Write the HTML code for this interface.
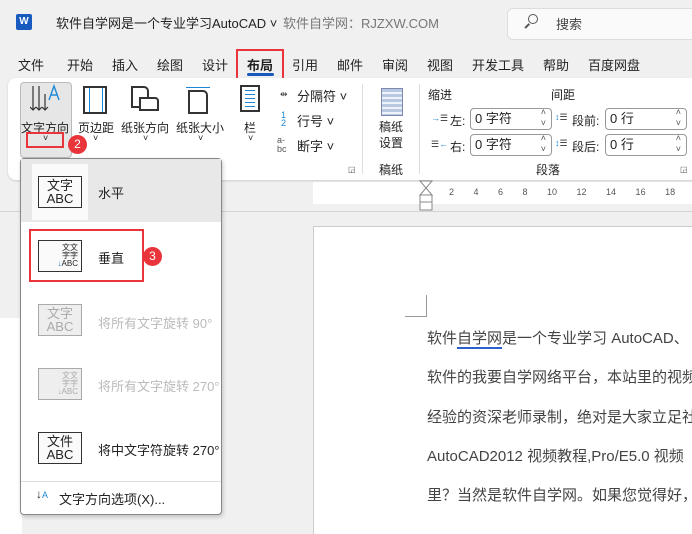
<!DOCTYPE html>
<html><head><meta charset="utf-8"><style>
*{margin:0;padding:0;box-sizing:border-box}
body{width:692px;height:534px;overflow:hidden;background:#f0f0f0;font-family:"Liberation Sans","Noto Sans CJK SC",sans-serif;position:relative;color:#222}
.a{position:absolute;white-space:nowrap}
.t{font-size:13px}
.s{font-size:12px}
.red{position:absolute;border:2px solid #e8343a}
.badge{position:absolute;width:19px;height:19px;border-radius:50%;background:#e8343a;color:#fff;font-size:12px;text-align:center;line-height:19px}
.spin{position:absolute;width:82px;height:22px;border:1px solid #999;border-radius:4px;background:#fff;font-size:13px;padding-left:4px;line-height:20px}
.spin:after{content:"˄\A˅";white-space:pre;position:absolute;right:5px;top:-2px;font-size:9px;line-height:11px;color:#555}
.mi{position:absolute;left:16px;width:42px;height:31px;border:1px solid #333;background:#fafafa;font-size:12px;text-align:center;line-height:13px;padding-top:2px}
.dim{border-color:#aaa;color:#aaa;background:#eee}
.doc{position:absolute;left:427px;font-size:15px;color:#444;white-space:nowrap}
.ic{position:absolute;font-size:9px;line-height:9px;color:#333}
</style></head><body>
<div class="a" style="left:16px;top:14px;width:16px;height:16px;background:#185abd;border-radius:2px;color:#fff;font-size:10px;font-weight:bold;text-align:center;line-height:16px">W</div>
<div class="a t" style="left:56px;top:13px">软件自学网是一个专业学习AutoCAD ˅</div>
<div class="a t" style="left:283px;top:13px;color:#777">软件自学网：RJZXW.COM</div>
<div class="a" style="left:507px;top:8px;width:200px;height:32px;background:#fafafa;border:1px solid #ddd;border-radius:6px"></div>
<div class="a" style="left:528px;top:14px;width:10px;height:10px;border:1.5px solid #555;border-radius:50%"></div>
<div class="a" style="left:524px;top:25px;width:6px;height:1.5px;background:#555;transform:rotate(-45deg)"></div>
<div class="a t" style="left:556px;top:14px;color:#444">搜索</div>
<div class="a t" style="left:18px;top:55px">文件</div>
<div class="a t" style="left:67px;top:55px">开始</div>
<div class="a t" style="left:112px;top:55px">插入</div>
<div class="a t" style="left:157px;top:55px">绘图</div>
<div class="a t" style="left:202px;top:55px">设计</div>
<div class="a t" style="left:247px;top:55px;font-weight:bold">布局</div>
<div class="a" style="left:247px;top:73px;width:27px;height:3px;background:#185abd;border-radius:2px"></div>
<div class="a t" style="left:292px;top:55px">引用</div>
<div class="a t" style="left:337px;top:55px">邮件</div>
<div class="a t" style="left:382px;top:55px">审阅</div>
<div class="a t" style="left:427px;top:55px">视图</div>
<div class="a t" style="left:472px;top:55px">开发工具</div>
<div class="a t" style="left:543px;top:55px">帮助</div>
<div class="a t" style="left:588px;top:55px">百度网盘</div>
<div class="red" style="left:236px;top:49px;width:48px;height:34px"></div>
<div class="badge" style="left:262px;top:81px">1</div>
<div class="a" style="left:8px;top:78px;width:700px;height:102px;background:#fff;border-radius:8px;box-shadow:0 1px 2px #ccc"></div>
<div class="a" style="left:20px;top:82px;width:52px;height:76px;background:#e6e6e6;border:1px solid #bbb;border-radius:4px"></div>
<svg class="a" style="left:30px;top:84px" width="34" height="32"><g stroke="#333" fill="none" stroke-width="1.2"><path d="M3 2V26M0 23L3 26L6 23M9 2V26M6 23L9 26L12 23M15 10V26M12 23L15 26L18 23"/></g><path d="M19 16L24 2L29 16M21 11H27" stroke="#1e88d8" fill="none" stroke-width="1.4"/></svg>
<div class="a s" style="left:21px;top:119px">文字方向</div>
<div class="red" style="left:26px;top:132px;width:38px;height:16px"></div>
<div class="a" style="left:43px;top:133px;font-size:9px">˅</div>
<div class="badge" style="left:68px;top:135px">2</div>
<div class="a" style="left:83px;top:86px;width:24px;height:28px;border:2px solid #333;background:linear-gradient(90deg,transparent 4px,#1e88d8 4px,#1e88d8 5px,transparent 5px,transparent 17px,#1e88d8 17px,#1e88d8 18px,transparent 18px)"></div>
<div class="a s" style="left:78px;top:119px">页边距</div>
<div class="a" style="left:93px;top:133px;font-size:9px">˅</div>
<div class="a" style="left:131px;top:86px;width:18px;height:22px;border:2px solid #333;border-radius:0 5px 0 0"></div>
<div class="a" style="left:139px;top:97px;width:20px;height:14px;border:2px solid #333;background:#fff;border-radius:0 4px 0 0"></div>
<div class="a s" style="left:121px;top:119px">纸张方向</div>
<div class="a" style="left:143px;top:133px;font-size:9px">˅</div>
<div class="a" style="left:188px;top:90px;width:20px;height:24px;border:2px solid #333;border-radius:0 5px 0 0"></div>
<div class="a" style="left:186px;top:87px;width:24px;height:1px;background:#1e88d8"></div>
<div class="a s" style="left:176px;top:119px">纸张大小</div>
<div class="a" style="left:198px;top:133px;font-size:9px">˅</div>
<div class="a" style="left:240px;top:85px;width:20px;height:27px;border:2px solid #333;background:repeating-linear-gradient(180deg,#fff 0 3px,#1e88d8 3px 4px);background-clip:content-box;padding:3px"></div>
<div class="a s" style="left:244px;top:119px">栏</div>
<div class="a" style="left:248px;top:133px;font-size:9px">˅</div>
<div class="ic" style="left:280px;top:90px">⇹</div>
<div class="a t" style="left:297px;top:86px">分隔符 ˅</div>
<div class="ic" style="left:281px;top:111px;color:#1e88d8;line-height:8px">1<br>2</div>
<div class="a t" style="left:297px;top:111px">行号 ˅</div>
<div class="ic" style="left:277px;top:136px;color:#555">a-<br>bc</div>
<div class="a t" style="left:297px;top:136px">断字 ˅</div>
<div class="a" style="left:348px;top:165px;font-size:8px;color:#555">◲</div>
<div class="a" style="left:362px;top:84px;width:1px;height:90px;background:#ddd"></div>
<div class="a" style="left:381px;top:88px;width:22px;height:28px;background:repeating-linear-gradient(180deg,#b8c8e0 0 3px,#eef2fa 3px 5px);border:1px solid #7a8ab0"></div>
<div class="a s" style="left:379px;top:119px;line-height:16px">稿纸<br>设置</div>
<div class="a s" style="left:379px;top:161px">稿纸</div>
<div class="a" style="left:419px;top:84px;width:1px;height:90px;background:#ddd"></div>
<div class="a s" style="left:428px;top:86px">缩进</div>
<div class="a s" style="left:551px;top:86px">间距</div>
<div class="ic" style="left:431px;top:114px"><span style="color:#1e88d8">→</span>☰</div>
<div class="a s" style="left:450px;top:112px">左:</div>
<div class="spin" style="left:470px;top:108px">0 字符</div>
<div class="ic" style="left:431px;top:140px">☰<span style="color:#1e88d8">←</span></div>
<div class="a s" style="left:450px;top:138px">右:</div>
<div class="spin" style="left:470px;top:134px">0 字符</div>
<div class="ic" style="left:555px;top:113px"><span style="color:#1e88d8">↕</span>☰</div>
<div class="a s" style="left:572px;top:112px">段前:</div>
<div class="spin" style="left:605px;top:108px">0 行</div>
<div class="ic" style="left:555px;top:139px"><span style="color:#1e88d8">↕</span>☰</div>
<div class="a s" style="left:572px;top:138px">段后:</div>
<div class="spin" style="left:605px;top:134px">0 行</div>
<div class="a s" style="left:536px;top:161px">段落</div>
<div class="a" style="left:680px;top:165px;font-size:8px;color:#555">◲</div>
<div class="a" style="left:313px;top:182px;width:380px;height:22px;background:#fff"></div>
<svg class="a" style="left:419px;top:180px" width="15" height="31"><path d="M1 1H13L7 8ZM7 8L13 15H1Z" fill="#fff" stroke="#888"/><rect x="1" y="22" width="12" height="8" fill="#fff" stroke="#888"/><rect x="1" y="15" width="12" height="7" fill="#fff" stroke="#888"/></svg>
<div class="a" style="left:449px;top:187px;font-size:9px;color:#555;word-spacing:17px">2 4 6 8 10 12 14 16 18 20</div>
<div class="a" style="left:0;top:211px;width:692px;height:1px;background:#d4d4d4"></div>
<div class="a" style="left:313px;top:226px;width:380px;height:308px;background:#fff;border-left:1px solid #ccc;border-top:1px solid #ccc"></div>
<div class="a" style="left:0px;top:318px;width:22px;height:216px;background:#fff"></div>
<div class="a" style="left:426px;top:295px;width:1px;height:21px;background:#999"></div>
<div class="a" style="left:405px;top:316px;width:22px;height:1px;background:#999"></div>
<div class="doc" style="top:327px">软件<span style="border-bottom:2px double #2a60d0">自学网</span>是一个专业学习 AutoCAD、</div>
<div class="doc" style="top:366px">软件的我要自学网络平台，本站里的视频</div>
<div class="doc" style="top:406px">经验的资深老师录制，绝对是大家立足社</div>
<div class="doc" style="top:445px">AutoCAD2012 视频教程,Pro/E5.0 视频</div>
<div class="doc" style="top:484px">里？当然是软件自学网。如果您觉得好，</div>
<div class="a" style="left:20px;top:158px;width:202px;height:357px;background:#fff;border:1px solid #888;border-radius:4px;box-shadow:1px 2px 4px rgba(0,0,0,.2)"></div>
<div class="a" style="left:21px;top:159px;width:200px;height:63px;background:#e8e8e8"></div>
<div class="a" style="left:32px;top:164px;width:56px;height:56px;background:#fafafa"></div>
<div class="mi" style="left:38px;top:176px;width:44px;height:32px;font-size:13px">文字<br>ABC</div>
<div class="a t" style="left:98px;top:183px">水平</div>
<div class="red" style="left:29px;top:229px;width:115px;height:53px"></div>
<div class="mi" style="left:38px;top:240px;width:44px;height:32px;text-align:right;font-size:8px;line-height:8px;padding:3px 3px 0 0">文文<br>字字<br><span style="color:#1e88d8">↓</span>ABC</div>
<div class="a t" style="left:98px;top:248px">垂直</div>
<div class="badge" style="left:143px;top:247px">3</div>
<div class="mi dim" style="left:38px;top:304px;width:44px;height:32px;font-size:13px">文字<br>ABC</div>
<div class="a t" style="left:98px;top:313px;color:#bbb">将所有文字旋转 90°</div>
<div class="mi dim" style="left:38px;top:368px;width:44px;height:32px;text-align:right;font-size:8px;line-height:8px;padding:3px 3px 0 0">文文<br>字字<br>↓ABC</div>
<div class="a t" style="left:98px;top:376px;color:#bbb">将所有文字旋转 270°</div>
<div class="mi" style="left:38px;top:432px;width:44px;height:32px;font-size:13px">文件<br>ABC</div>
<div class="a t" style="left:98px;top:440px">将中文字符旋转 270°</div>
<div class="a" style="left:21px;top:481px;width:200px;height:1px;background:#ddd"></div>
<div class="a" style="left:36px;top:487px;font-size:12px">↓<span style="color:#1e88d8;font-size:9px">A</span></div>
<div class="a t" style="left:59px;top:489px">文字方向选项(X)...</div>
</body></html>
